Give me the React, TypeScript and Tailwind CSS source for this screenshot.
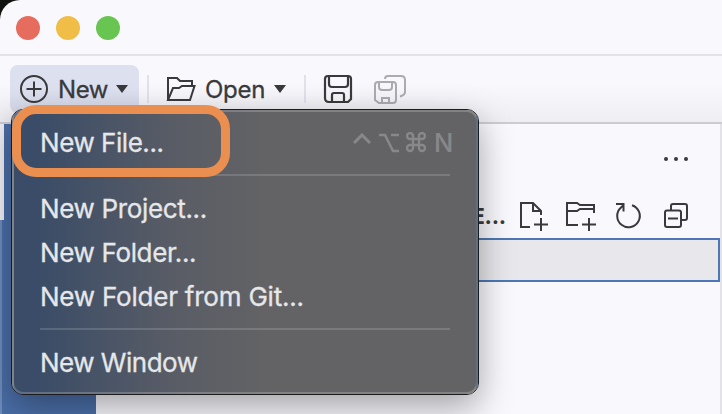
import type { ReactNode } from "react";

function Icon({ w, h, color = "#3a3a3c", sw = 2, children }: { w: number; h: number; color?: string; sw?: number; children: ReactNode }) {
  return (
    <svg width={w} height={h} viewBox={`0 0 ${w} ${h}`} fill="none" stroke={color} strokeWidth={sw} className="block shrink-0">
      {children}
    </svg>
  );
}

function Caret() {
  return (
    <Icon w={12} h={8}>
      <path d="M0 0H12L6 8Z" fill="#3a3a3c" stroke="none" />
    </Icon>
  );
}

function Toolbar() {
  return (
    <div className="flex h-[68px] items-start border-b-2 border-[#cdccd3] bg-linear-to-b from-[#f9f8fd] from-40% to-[#efeef3] pt-[9px] pl-[10px] text-[24px] leading-[30px] text-[#3a3a3c]">
      <div className="flex h-12 w-[129px] shrink-0 items-center rounded-lg bg-linear-to-b from-[#dde0ef] from-50% to-[#d5d8e8] pl-[10px]">
        <Icon w={28} h={28}>
          <circle cx="14" cy="14" r="13" />
          <path d="M14 6.5V21.5M6.5 14H21.5" />
        </Icon>
        <span className="mt-px ml-[10px] w-[58px] whitespace-nowrap tracking-[-0.4px] [-webkit-text-stroke:0.3px]">New</span>
        <Caret />
      </div>
      <div className="mt-[10px] ml-2 h-7 w-[2px] bg-[#e2e1ea]" />
      <div className="flex h-12 items-center pl-[17px]">
        <Icon w={30} h={26}>
          <path d="M2 24V2H11L14 5H26V10M2 24L7 12H13L16 10H28.5L24 24Z" />
        </Icon>
        <span className="mt-px ml-[9px] w-[69px] whitespace-nowrap tracking-[-0.3px] [-webkit-text-stroke:0.3px]">Open</span>
        <Caret />
      </div>
      <div className="mt-[10px] ml-[18px] h-7 w-[2px] bg-[#e2e1ea]" />
      <div className="flex h-12 items-center gap-5 pl-[17px]">
        <Icon w={30} h={30} sw={2.2}>
          <path d="M5 2H25Q28 2 28 5V25L25 28H6Q2 28 2 24V5Q2 2 5 2Z" />
          <path d="M6 2V10Q6 13 9 13H22Q25 13 25 10V2M9 28V21Q9 19 11 19H19Q21 19 21 21V28" />
        </Icon>
        <Icon w={34} h={32} color="#acacb0">
          <path d="M12 6Q12 3 15 3H28Q32 3 32 7V19Q32 22 27 23.5" />
          <path d="M5 9H20Q23 9 23 12V27Q23 30 20 30H6L2 27V12Q2 9 5 9ZM6 9V14Q6 17 9 17H16Q19 17 19 14V9M9 30V25H16V30" />
        </Icon>
      </div>
    </div>
  );
}

function Explorer() {
  return (
    <div className="flex min-w-0 grow flex-col border-r-2 border-[#e3e2e8]">
      <div className="flex h-[70px] items-center justify-end pr-[31px]">
        <Icon w={26} h={6}>
          <g fill="#3a3a3c" stroke="none">
            <circle cx="3" cy="3" r="2" />
            <circle cx="13" cy="3" r="2" />
            <circle cx="23" cy="3" r="2" />
          </g>
        </Icon>
      </div>
      <div className="flex h-11 items-center justify-end pr-[31px] text-[#3a3a3c]">
        <span className="mr-[13px] text-[22px] font-bold tracking-[-0.2px]">E...</span>
        <Icon w={30} h={32}>
          <path d="M11 27H2V3H14L22 11V15M14 3V11H22M22 18V31M15 24.5H29" />
        </Icon>
        <div className="w-4" />
        <Icon w={32} h={32}>
          <path d="M13 25H2V3H12L15 5H29V13M2 11H12L15 9H29M24 18V31M17 24.5H31" />
        </Icon>
        <div className="w-[18px]" />
        <Icon w={28} h={30}>
          <path d="M17 4.2A11.3 11.3 0 1 1 6 6.5L8.5 4M1 3H8.5V10.5" />
        </Icon>
        <div className="w-5" />
        <Icon w={26} h={28}>
          <path d="M8 8V4Q8 2 10 2H22Q24 2 24 4V16Q24 18 22 18H18" />
          <rect x="2" y="8.5" width="16" height="16.5" rx="2" />
          <path d="M5 16.5H15" />
        </Icon>
      </div>
      <div className="h-11 border-2 border-[#4d77b5] bg-[#e8e7eb]" />
    </div>
  );
}

function Item({ children, shortcut, tracking = "tracking-[-0.35px]" }: { children: ReactNode; shortcut?: ReactNode; tracking?: string }) {
  return (
    <div className="flex h-11 items-center justify-between whitespace-nowrap">
      <span className={`${tracking} [-webkit-text-stroke:0.3px]`}>{children}</span>
      {shortcut}
    </div>
  );
}

function Separator() {
  return (
    <div className="flex h-[22px] items-start pt-[9px]">
      <div className="mr-1 h-[2px] grow bg-white/15" />
    </div>
  );
}

function Menu() {
  return (
    <div className="absolute top-[109px] left-[11px] h-[286px] w-[468px] rounded-xl border border-[#1c1c1e] shadow-[0_12px_34px_rgba(0,0,0,0.35)]">
      <div className="h-full rounded-[11px] border-2 border-white/20 bg-linear-to-r from-[#3a4c67] from-5% via-[#5a5d65] via-36% to-[#636365] to-55% bg-clip-border pt-[9px] pr-[22px] pl-[26px] text-[26px] leading-[32px] text-[#e6e7e9]">
        <Item
          tracking="tracking-[-0.45px]"
          shortcut={
            <span className="flex items-center text-[#88888a]">
              <Icon w={18} h={20} color="#88888a" sw={3}>
                <path d="M1 10L9 2L17 10" />
              </Icon>
              <div className="w-2" />
              <Icon w={21} h={20} color="#88888a" sw={2.6}>
                <path d="M0 2H6L14 18H20M12 2H20" />
              </Icon>
              <div className="w-[6px]" />
              <Icon w={20} h={22} color="#88888a" sw={2.4}>
                <path d="M7 7V4A3 3 0 1 0 4 7H16A3 3 0 1 0 13 4V16A3 3 0 1 0 16 13H4A3 3 0 1 0 7 16Z" />
              </Icon>
              <span className="ml-2 w-5 text-[25.5px] font-medium">N</span>
            </span>
          }
        >
          New File...
        </Item>
        <Separator />
        <Item>New Project...</Item>
        <Item>New Folder...</Item>
        <Item tracking="tracking-[-0.22px]">New Folder from Git...</Item>
        <Separator />
        <Item tracking="tracking-[-0.5px]">New Window</Item>
      </div>
    </div>
  );
}

export default function App() {
  return (
    <div className="relative h-[414px] w-[722px] overflow-hidden bg-[#10130f] font-[Inter,'Liberation_Sans',sans-serif]">
      <div className="flex h-full flex-col overflow-hidden rounded-tl-[20px] bg-[#f9f8fd]">
        <div className="flex h-14 shrink-0 items-center gap-4 border-b-2 border-[#e3e2e8] pt-[2px] pl-4">
          <div className="size-6 rounded-full bg-[#e66d5d]" />
          <div className="size-6 rounded-full bg-[#f0be46]" />
          <div className="size-6 rounded-full bg-[#69c551]" />
        </div>
        <Toolbar />
        <div className="flex min-h-0 grow">
          <div className="flex w-24 shrink-0 flex-col bg-[#4b6fa9]">
            <div className="h-24 w-1 bg-[#f2f1f6]" />
            <div className="w-[2px] grow bg-[#6f8dbd]" />
          </div>
          <Explorer />
        </div>
      </div>
      <Menu />
      <div className="absolute top-[105px] left-[12px] h-[72px] w-[218px] rounded-[24px] border-[9px] border-[#ea8f50]" />
    </div>
  );
}
